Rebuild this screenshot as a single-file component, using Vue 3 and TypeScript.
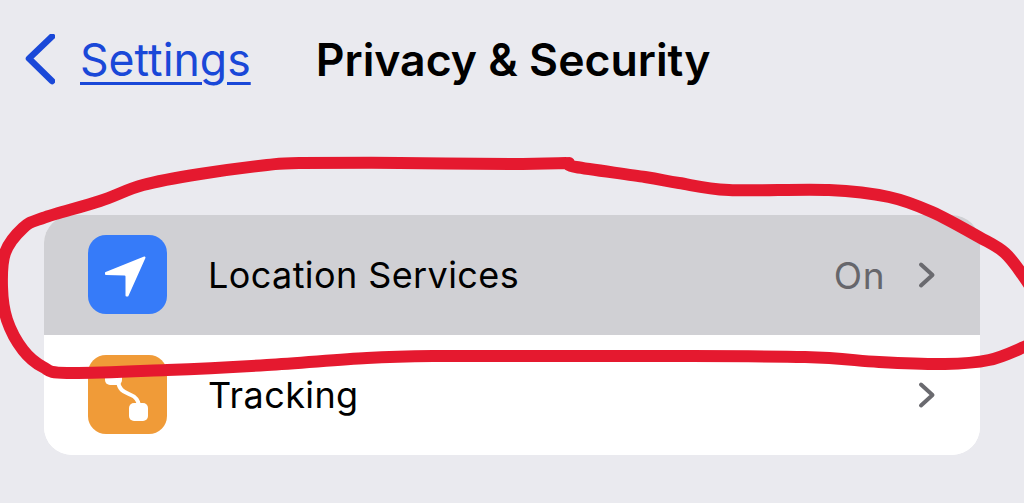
<script setup lang="ts">
interface Row {
  label: string;
  value?: string;
  selected: boolean;
}
type Point = [number, number];

const rows: Row[] = [
  { label: "Location Services", value: "On", selected: true },
  { label: "Tracking", selected: false },
];

const lassoPoints: Point[] = [
  [1036, 340], [1024, 347], [989, 360], [945, 364], [879, 362], [805, 357], [650, 356], [512, 356], [433, 356],
  [367, 358], [267, 365], [167, 370], [67, 373], [43, 367], [23, 350], [7, 320], [2, 287], [5, 253], [23, 228],
  [43, 218], [100, 201], [143, 185], [200, 174], [267, 165], [300, 163], [400, 163], [512, 164], [566, 163],
];
const lassoTail: Point[] = [
  [569, 163], [576, 167], [645, 177], [679, 183], [729, 190], [829, 190], [889, 197], [932, 212], [979, 237],
  [1005, 253], [1024, 277], [1036, 296],
];

function smooth(points: Point[]): string {
  let d = `M${points[0][0]} ${points[0][1]}`;
  for (let i = 0; i < points.length - 1; i++) {
    const p0 = points[Math.max(i - 1, 0)];
    const p1 = points[i];
    const p2 = points[i + 1];
    const p3 = points[Math.min(i + 2, points.length - 1)];
    const c1x = p1[0] + (p2[0] - p0[0]) / 6;
    const c1y = p1[1] + (p2[1] - p0[1]) / 6;
    const c2x = p2[0] - (p3[0] - p1[0]) / 6;
    const c2y = p2[1] - (p3[1] - p1[1]) / 6;
    d += ` C${c1x.toFixed(1)} ${c1y.toFixed(1)} ${c2x.toFixed(1)} ${c2y.toFixed(1)} ${p2[0]} ${p2[1]}`;
  }
  return d;
}
const lasso = `${smooth(lassoPoints)} ${smooth(lassoTail)}`;
</script>

<template>
  <div class="screen">
    <header class="nav">
      <svg class="back" width="32" height="52" viewBox="0 0 32 52" aria-hidden="true">
        <path d="M29 2.500 L6 24.500 L29 47" fill="none" stroke="#1a48d8" stroke-width="6.500" stroke-linecap="round" stroke-linejoin="round" />
      </svg>
      <a class="back-link">Settings</a>
      <h1 class="title">Privacy &amp; Security</h1>
    </header>

    <section class="card">
      <div v-for="row in rows" :key="row.label" class="row" :class="{ selected: row.selected }">
        <div class="icon" :class="row.selected ? 'blue' : 'orange'">
          <svg v-if="row.selected" width="79" height="79" viewBox="0 0 79 79" aria-hidden="true">
            <path d="M18 38 L56.500 22.500 L39.500 60.500 L38.500 60.500 L38.500 41.500 Q38.500 39.500 36.500 39.500 L18 39 Z" fill="#fff" stroke="#fff" stroke-width="2" stroke-linejoin="round" />
          </svg>
          <svg v-else width="79" height="79" viewBox="0 0 79 79" aria-hidden="true">
            <path d="M30 26 C31 36 37 37 43 40 C48 42 50 45 51 50" fill="none" stroke="#fff" stroke-width="4" stroke-linecap="round" />
            <rect x="17" y="12" width="17" height="18" rx="5" fill="#fff" />
            <rect x="41" y="48" width="19" height="18" rx="5" fill="#fff" />
          </svg>
        </div>
        <span class="label">{{ row.label }}</span>
        <span v-if="row.value" class="value">{{ row.value }}</span>
        <svg class="chevron" width="18" height="28" viewBox="0 0 18 28" aria-hidden="true">
          <path d="M3 3.500 L14.500 14 L3 24.500" fill="none" stroke="#6a6a6f" stroke-width="4" stroke-linecap="round" stroke-linejoin="round" />
        </svg>
      </div>
    </section>

    <svg class="lasso" width="1024" height="503" viewBox="0 0 1024 503" aria-hidden="true">
      <path :d="lasso" fill="none" stroke="#e5192f" stroke-width="12" stroke-linecap="round" stroke-linejoin="round" />
    </svg>
  </div>
</template>

<style scoped>
.screen {
  position: relative;
  width: 1024px;
  height: 503px;
  overflow: hidden;
  background: #eaeaef;
  font-family: Inter, "Liberation Sans", sans-serif;
  color: #000;
}
.nav {
  display: flex;
  align-items: center;
  height: 120px;
  padding-left: 23px;
}
.back {
  flex: none;
  margin-right: 25px;
}
.back-link {
  font-size: 44.600px;
  color: #1a48d8;
  text-decoration: underline;
  text-decoration-thickness: 2.500px;
  text-underline-offset: 6px;
}
.title {
  margin: 0 0 0 65px;
  font-size: 44.600px;
  font-weight: 600;
}
.card {
  margin: 95px 44px 0;
  border-radius: 28px;
  overflow: hidden;
  background: #fff;
}
.row {
  display: flex;
  align-items: center;
  height: 120px;
  padding: 0 44px;
  background: #fff;
}
.row.selected {
  background: #d0d0d4;
}
.icon {
  flex: none;
  width: 79px;
  height: 79px;
  margin-right: 41px;
  margin-bottom: 1px;
  border-radius: 18px;
}
.icon svg {
  display: block;
}
.blue {
  background: #367bf9;
}
.orange {
  background: #f09b38;
}
.label {
  flex: 1;
  font-size: 36px;
  letter-spacing: 0.4px;
}
.value {
  margin-right: 33px;
  font-size: 37px;
  letter-spacing: 0.5px;
  color: #66666b;
}
.chevron {
  flex: none;
}
.lasso {
  position: absolute;
  left: 0;
  top: 0;
  pointer-events: none;
}
</style>
